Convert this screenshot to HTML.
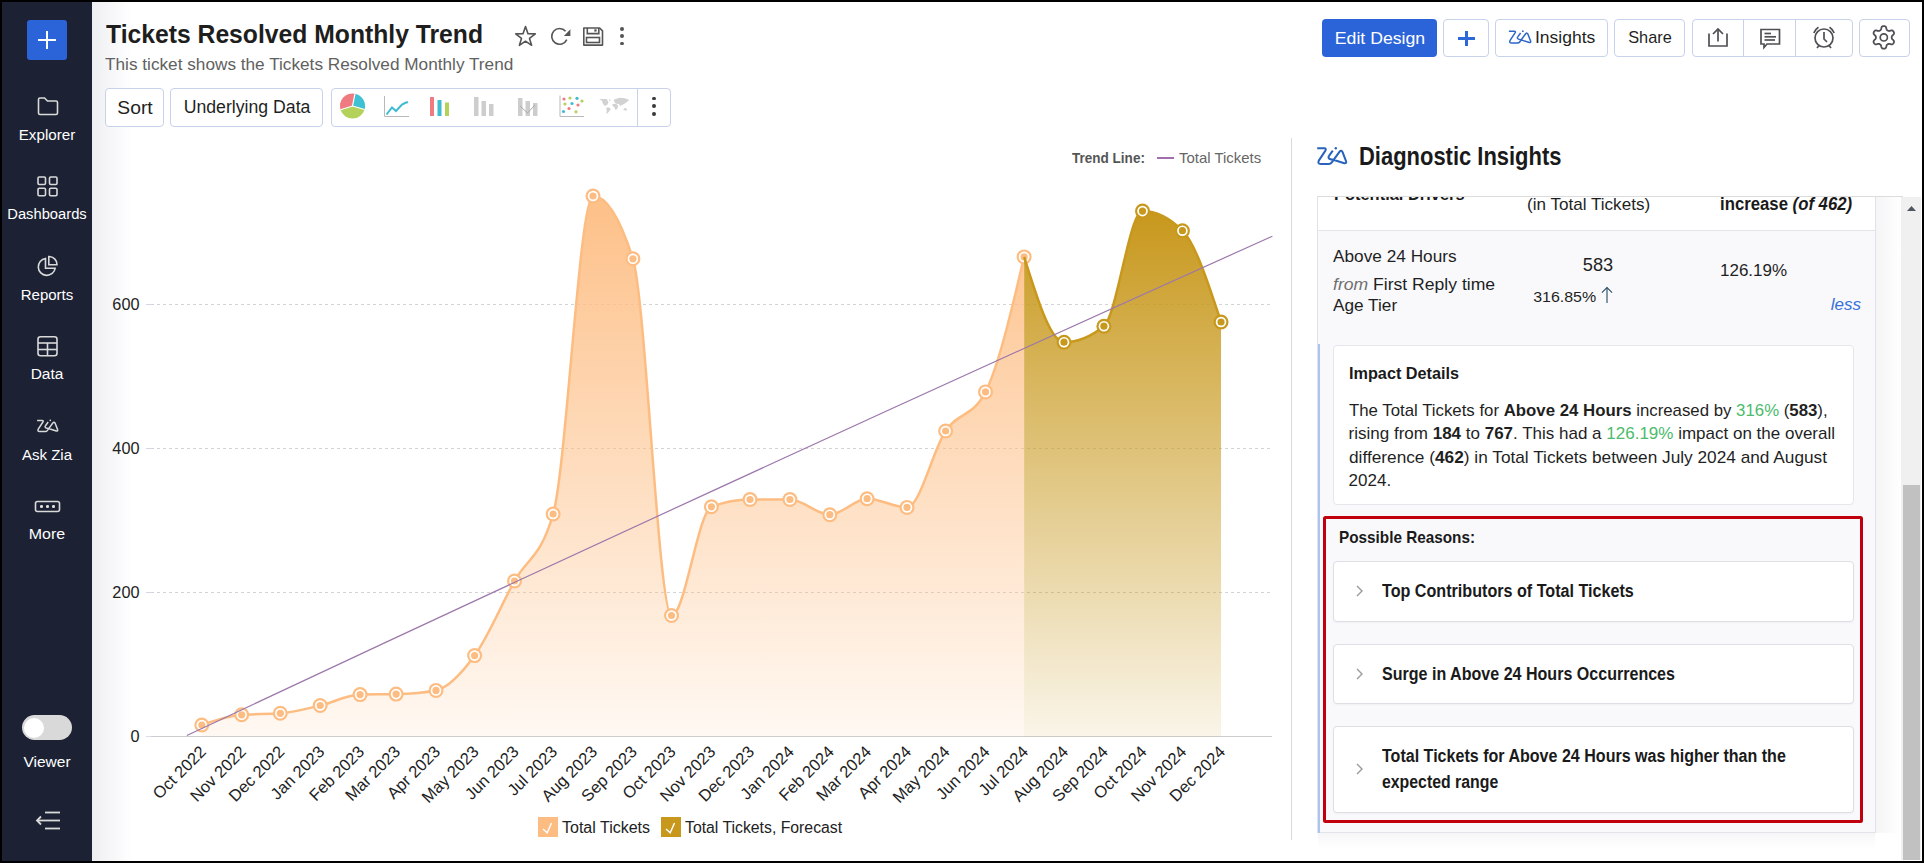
<!DOCTYPE html>
<html><head><meta charset="utf-8"><title>Tickets Resolved Monthly Trend</title>
<style>
html,body{margin:0;padding:0;}
body{width:1924px;height:863px;position:relative;overflow:hidden;background:#000;font-family:"Liberation Sans", sans-serif;}
#main{position:absolute;left:2px;top:2px;width:1920px;height:859px;background:#fff;}
</style></head><body>
<div id="main"></div>
<div style="position:absolute;left:2px;top:2px;width:90px;height:859px;background:#1c2233"></div>
<div style="position:absolute;left:27px;top:20px;width:40px;height:40px;background:#2b64d9;border-radius:3px"></div>
<div style="position:absolute;left:38px;top:39px;width:18px;height:2.4px;background:#fff"></div>
<div style="position:absolute;left:45.8px;top:31px;width:2.4px;height:18px;background:#fff"></div>
<svg width="94" height="863" style="position:absolute;left:0;top:0" fill="none" stroke="#d9d9d9" stroke-width="1.6">
<path d="M38.5,99 L38.5,113 Q38.5,114.5 40,114.5 L56,114.5 Q57.5,114.5 57.5,113 L57.5,102.5 Q57.5,101 56,101 L47.5,101 L44.5,98 L40,98 Q38.5,98 38.5,99.5 Z"/>
<rect x="38" y="177" width="7.5" height="7.5" rx="1.2"/><rect x="49.5" y="177" width="7.5" height="7.5" rx="1.2"/>
<rect x="38" y="188.2" width="7.5" height="7.5" rx="1.2"/><rect x="49.5" y="188.2" width="7.5" height="7.5" rx="1.2"/>
<path d="M45.5,258.5 A8.5,8.5 0 1 0 55.2,268.2 L45.5,268.2 Z"/>
<path d="M48.8,256.5 A8,8 0 0 1 57,264.7 L48.8,264.7 Z"/>
<rect x="38" y="336.8" width="19" height="19" rx="2.5"/><line x1="38" y1="343" x2="57" y2="343"/><line x1="38" y1="349.5" x2="57" y2="349.5"/><line x1="47.5" y1="343" x2="47.5" y2="356"/>
<g transform="translate(33.4,414.5) scale(0.71)"><path d="M5.2,8.3 L12.3,8.3 Q14.6,8.4 13.4,10.6 L6.8,20.6 Q5.3,23.9 8.8,24.1 L16.8,24.1 Q18.6,24 19.8,22.3 L27.6,11.6 Q29.3,9.8 30.6,12.2 L34.1,21.3 Q34.8,23.6 32.3,23.3 L21.3,19.8 Q17.2,19.4 16.6,17.8 Q16.2,16.8 17,15.8 L20.8,10.6" stroke-width="2.1" stroke-linejoin="round"/><circle cx="23.8" cy="8.2" r="1.2" fill="#d9d9d9" stroke="none"/></g>
<rect x="35.5" y="501.5" width="24" height="10" rx="2"/>
</svg>
<div style="position:absolute;left:40.1px;top:505.2px;width:2.6px;height:2.6px;border-radius:50%;background:#e0e0e0"></div>
<div style="position:absolute;left:46.1px;top:505.2px;width:2.6px;height:2.6px;border-radius:50%;background:#e0e0e0"></div>
<div style="position:absolute;left:52.1px;top:505.2px;width:2.6px;height:2.6px;border-radius:50%;background:#e0e0e0"></div>
<div style="position:absolute;left:47px;transform:translateX(-50%) scaleX(0.98);top:126.78px;font-size:15.5px;line-height:15.5px;font-weight:normal;font-style:normal;color:#ffffff;white-space:nowrap;">Explorer</div>
<div style="position:absolute;left:47px;transform:translateX(-50%) scaleX(0.95);top:206.28px;font-size:15.5px;line-height:15.5px;font-weight:normal;font-style:normal;color:#ffffff;white-space:nowrap;">Dashboards</div>
<div style="position:absolute;left:47px;transform:translateX(-50%) scaleX(0.97);top:286.78px;font-size:15.5px;line-height:15.5px;font-weight:normal;font-style:normal;color:#ffffff;white-space:nowrap;">Reports</div>
<div style="position:absolute;left:47px;transform:translateX(-50%) scaleX(1.0);top:366.28px;font-size:15.5px;line-height:15.5px;font-weight:normal;font-style:normal;color:#ffffff;white-space:nowrap;">Data</div>
<div style="position:absolute;left:47px;transform:translateX(-50%) scaleX(0.97);top:446.78px;font-size:15.5px;line-height:15.5px;font-weight:normal;font-style:normal;color:#ffffff;white-space:nowrap;">Ask Zia</div>
<div style="position:absolute;left:47px;transform:translateX(-50%) scaleX(1.03);top:526.28px;font-size:15.5px;line-height:15.5px;font-weight:normal;font-style:normal;color:#ffffff;white-space:nowrap;">More</div>
<div style="position:absolute;left:22.3px;top:715px;width:49.7px;height:25.2px;border-radius:12.6px;background:#d9d9d9"></div>
<div style="position:absolute;left:23.6px;top:717.6px;width:20.6px;height:20.6px;border-radius:50%;background:#fff"></div>
<div style="position:absolute;left:47px;transform:translateX(-50%) scaleX(1.035);top:754.30px;font-size:15px;line-height:15px;font-weight:normal;font-style:normal;color:#ffffff;white-space:nowrap;">Viewer</div>
<svg width="30" height="24" style="position:absolute;left:33px;top:809px" fill="none" stroke="#d9d9d9" stroke-width="1.8">
<line x1="12" y1="3.5" x2="27" y2="3.5"/><line x1="4" y1="11.5" x2="27" y2="11.5"/><line x1="12" y1="19.5" x2="27" y2="19.5"/><path d="M8,7.5 L4,11.5 L8,15.5"/></svg>
<div style="position:absolute;left:92px;top:2px;width:40px;height:859px;background:linear-gradient(to right,#eeeff2,rgba(255,255,255,0))"></div>
<div style="position:absolute;left:106px;top:20.69px;font-size:26px;line-height:26px;font-weight:bold;font-style:normal;color:#1e1e1e;white-space:nowrap;transform:scaleX(0.95);transform-origin:left center;">Tickets Resolved Monthly Trend</div>
<div style="position:absolute;left:104.5px;top:55.81px;font-size:17px;line-height:17px;font-weight:normal;font-style:normal;color:#616161;white-space:nowrap;transform:scaleX(1.012);transform-origin:left center;">This ticket shows the Tickets Resolved Monthly Trend</div>
<svg width="130" height="30" style="position:absolute;left:510px;top:21px" fill="none" stroke="#555" stroke-width="1.6">
<path d="M15.5,5.5 L18,12.7 L25.3,12.9 L19.5,17.4 L21.6,24.3 L15.5,20.2 L9.4,24.3 L11.5,17.4 L5.7,12.9 L13,12.7 Z" stroke-linejoin="round"/>
<path d="M56.8,18.6 A7.9,7.9 0 1 1 55.6,10.2" />
<path d="M60.4,8.2 L60.4,14.9 L53.9,14.9 Z" fill="#555" stroke="none"/>
<path d="M73.8,7 L89.6,7 L92.5,9.9 L92.5,24.1 L73.8,24.1 Z" stroke-linejoin="round"/>
<path d="M77.3,7 L77.3,12.6 L88.8,12.6 L88.8,7"/>
<rect x="84.3" y="8.3" width="2.3" height="2.3" fill="#555" stroke="none"/>
<rect x="76.5" y="16.5" width="13" height="5"/>
</svg>
<div style="position:absolute;left:620.1px;top:26.900000000000002px;width:3.8px;height:3.8px;border-radius:50%;background:#555"></div>
<div style="position:absolute;left:620.1px;top:34.4px;width:3.8px;height:3.8px;border-radius:50%;background:#555"></div>
<div style="position:absolute;left:620.1px;top:41.7px;width:3.8px;height:3.8px;border-radius:50%;background:#555"></div>
<div style="position:absolute;left:105px;top:88px;width:59px;height:38.5px;box-sizing:border-box;border:1px solid #c8d2ea;border-radius:4px;background:#fff;"></div>
<div style="position:absolute;left:134.5px;transform:translateX(-50%) scaleX(1.07);top:98.96px;font-size:18px;line-height:18px;font-weight:normal;font-style:normal;color:#1f1f1f;white-space:nowrap;">Sort</div>
<div style="position:absolute;left:170px;top:88px;width:153px;height:38.5px;box-sizing:border-box;border:1px solid #c8d2ea;border-radius:4px;background:#fff;"></div>
<div style="position:absolute;left:246.8px;transform:translateX(-50%) scaleX(1.01);top:99.39px;font-size:17.5px;line-height:17.5px;font-weight:normal;font-style:normal;color:#1f1f1f;white-space:nowrap;">Underlying Data</div>
<div style="position:absolute;left:330.5px;top:88px;width:340px;height:38.5px;box-sizing:border-box;border:1px solid #c8d2ea;border-radius:4px;background:#fff;"></div>
<div style="position:absolute;left:637px;top:89px;width:1px;height:36.5px;background:#c8d2ea"></div>
<svg width="340" height="40" style="position:absolute;left:330px;top:87px">
<g transform="translate(22.5,19)">
<path d="M0,0 L2.5,-12.3 A12.6,12.6 0 0 1 12.1,3.5 Z" fill="#3fc1d4"/>
<path d="M0,0 L12.1,3.5 A12.6,12.6 0 0 1 -12,3.8 Z" fill="#b4d15a"/>
<path d="M0,0 L-12,3.8 A12.6,12.6 0 0 1 2.5,-12.3 Z" fill="#ef7a7f"/>
<path d="M0,0 L2.5,-12.3 M0,0 L12.1,3.5 M0,0 L-12,3.8" stroke="#fff" stroke-width="1.2"/>
</g>
<path d="M54.5,9 L54.5,29.5 L79,29.5" fill="none" stroke="#b9b9b9" stroke-width="1"/>
<path d="M56.5,27.5 L62,20.5 L66,24 L72,17.5 L75,16 L78,15" fill="none" stroke="#3fbcd2" stroke-width="2"/>
<rect x="100" y="10" width="4" height="19" fill="#ef7a7f"/>
<rect x="107.5" y="13" width="4" height="16" fill="#3fbcd2"/>
<rect x="115" y="15.5" width="4" height="13.5" fill="#b4d15a"/>
<g fill="#cdcdcd">
<rect x="144" y="10" width="4.5" height="19"/><rect x="151.5" y="14" width="4.5" height="15"/><rect x="159" y="17" width="4.5" height="12"/>
<rect x="188" y="11" width="4.5" height="18"/><rect x="195.5" y="14" width="4.5" height="15"/><rect x="203" y="16" width="4.5" height="13"/>
</g>
<path d="M190,19 L197.5,26 L205,18" fill="none" stroke="#a8a8a8" stroke-width="1"/>
<path d="M230,8.5 L230,29.5 L254,29.5" fill="none" stroke="#b9b9b9" stroke-width="1"/>
<circle cx="234" cy="12" r="1.6" fill="#ef7a7f"/><circle cx="240" cy="11" r="1.6" fill="#b4d15a"/><circle cx="247" cy="11.3" r="1.6" fill="#3fbcd2"/><circle cx="252" cy="14" r="1.6" fill="#b4d15a"/>
<circle cx="235" cy="17" r="1.6" fill="#b4d15a"/><circle cx="242" cy="16.5" r="1.6" fill="#3fbcd2"/><circle cx="248" cy="18" r="1.6" fill="#ef7a7f"/>
<circle cx="239" cy="21.5" r="1.6" fill="#ef7a7f"/><circle cx="233.5" cy="24.5" r="1.6" fill="#3fbcd2"/><circle cx="246" cy="24.8" r="1.6" fill="#b4d15a"/>
<g fill="#d2d2d2">
<path d="M269.1,11.9 L276.7,11.9 L278.5,15.2 L277.4,17.8 L274.8,19 L273,16.7 L271.9,13.8 Z"/>
<path d="M278.9,12.3 L280.4,12.8 L280.2,14.1 L279.2,13.8 Z"/>
<path d="M276.3,20.4 L279.3,20.4 L280.8,22.3 L277.8,26 L276.3,26.7 L276.7,23.4 Z"/>
<path d="M284.1,12.6 L289.7,10.8 L294.9,11.2 L299.3,13 L295.6,16 L292.6,17.8 L290.4,19 L288.9,17.1 L286,16.7 L283.7,14.1 Z"/>
<path d="M282.6,17.1 L286,16.7 L288.2,18.6 L287.4,21.5 L285.6,23.2 L284.5,20.4 L282.3,18.6 Z"/>
<path d="M293.4,21.9 L295.6,20.8 L297.1,22.7 L296.3,23.8 L293.8,23 Z"/>
</g>
</svg>
<div style="position:absolute;left:651.9px;top:96.69999999999999px;width:3.8px;height:3.8px;border-radius:50%;background:#3a3a3a"></div>
<div style="position:absolute;left:651.9px;top:104.39999999999999px;width:3.8px;height:3.8px;border-radius:50%;background:#3a3a3a"></div>
<div style="position:absolute;left:651.9px;top:111.8px;width:3.8px;height:3.8px;border-radius:50%;background:#3a3a3a"></div>
<div style="position:absolute;left:1322px;top:19px;width:115px;height:38px;background:#2b64d9;border-radius:4px"></div>
<div style="position:absolute;left:1379.8px;transform:translateX(-50%) scaleX(1.04);top:29.61px;font-size:17px;line-height:17px;font-weight:normal;font-style:normal;color:#fff;white-space:nowrap;">Edit Design</div>
<div style="position:absolute;left:1443px;top:19px;width:45.5px;height:37.5px;box-sizing:border-box;border:1px solid #c8d2ea;border-radius:4px;background:#fff;"></div>
<div style="position:absolute;left:1458px;top:37px;width:17px;height:2.6px;background:#2d68d8"></div>
<div style="position:absolute;left:1465.2px;top:30.8px;width:2.6px;height:15.4px;background:#2d68d8"></div>
<div style="position:absolute;left:1495px;top:19px;width:112.5px;height:37.5px;box-sizing:border-box;border:1px solid #c8d2ea;border-radius:4px;background:#fff;"></div>
<svg width="40" height="30" style="position:absolute;left:1505px;top:24.5px" fill="none" stroke="#2d66c8" stroke-width="2"><g transform="translate(0,0) scale(0.75)">
<path d="M5.2,8.3 L12.3,8.3 Q14.6,8.4 13.4,10.6 L6.8,20.6 Q5.3,23.9 8.8,24.1 L16.8,24.1 Q18.6,24 19.8,22.3 L27.6,11.6 Q29.3,9.8 30.6,12.2 L34.1,21.3 Q34.8,23.6 32.3,23.3 L21.3,19.8 Q17.2,19.4 16.6,17.8 Q16.2,16.8 17,15.8 L20.8,10.6" stroke-linejoin="round"/><circle cx="23.8" cy="8.2" r="1.2" fill="#2d66c8" stroke="none"/></g></svg>
<div style="position:absolute;left:1535px;top:29.21px;font-size:17px;line-height:17px;font-weight:normal;font-style:normal;color:#1f1f1f;white-space:nowrap;transform:scaleX(1.03);transform-origin:left center;">Insights</div>
<div style="position:absolute;left:1614px;top:19px;width:71px;height:37.5px;box-sizing:border-box;border:1px solid #c8d2ea;border-radius:4px;background:#fff;"></div>
<div style="position:absolute;left:1649.5px;transform:translateX(-50%) scaleX(0.96);top:29.21px;font-size:17px;line-height:17px;font-weight:normal;font-style:normal;color:#1f1f1f;white-space:nowrap;">Share</div>
<div style="position:absolute;left:1692px;top:19px;width:161px;height:37.5px;box-sizing:border-box;border:1px solid #c8d2ea;border-radius:4px;background:#fff;"></div>
<div style="position:absolute;left:1743px;top:19px;width:1px;height:37.5px;background:#c8d2ea"></div>
<div style="position:absolute;left:1795px;top:19px;width:1px;height:37.5px;background:#c8d2ea"></div>
<div style="position:absolute;left:1859px;top:19px;width:51px;height:37.5px;box-sizing:border-box;border:1px solid #c8d2ea;border-radius:4px;background:#fff;"></div>
<svg width="240" height="40" style="position:absolute;left:1690px;top:15px" fill="none" stroke="#4f4f55" stroke-width="1.7">
<path d="M19,18.5 L19,31 L37,31 L37,18.5"/><line x1="28" y1="14.5" x2="28" y2="26.5"/><path d="M23,19 L28,14 L33,19"/>
<path d="M71,14.5 L89.5,14.5 L89.5,29 L77,29 L74,32.5 L74,29 L71,29 Z"/>
<line x1="74.5" y1="18.5" x2="81" y2="18.5"/><line x1="74.5" y1="21.8" x2="86" y2="21.8"/><line x1="74.5" y1="25" x2="85" y2="25"/>
<circle cx="134" cy="23" r="9"/><path d="M134,17 L134,24 L137,27"/><path d="M123.8,18 A11.5,11.5 0 0 1 128.5,12.2"/><path d="M139.5,12.2 A11.5,11.5 0 0 1 144.2,18"/><line x1="129" y1="30.5" x2="127" y2="33"/><line x1="139" y1="30.5" x2="141" y2="33"/>
<g transform="translate(193.8,22.4)"><path d="M0.00,-11.30 L0.49,-11.27 L0.98,-11.18 L1.45,-11.00 L1.88,-10.66 L2.23,-10.08 L2.48,-9.27 L2.67,-8.47 L2.86,-7.87 L3.10,-7.49 L3.37,-7.23 L3.66,-7.02 L3.95,-6.84 L4.25,-6.68 L4.57,-6.53 L4.93,-6.43 L5.38,-6.42 L6.00,-6.54 L6.79,-6.79 L7.61,-6.97 L8.29,-6.96 L8.80,-6.76 L9.20,-6.44 L9.52,-6.06 L9.79,-5.65 L10.01,-5.21 L10.18,-4.74 L10.25,-4.25 L10.17,-3.70 L9.85,-3.10 L9.27,-2.48 L8.67,-1.92 L8.25,-1.45 L8.03,-1.06 L7.94,-0.69 L7.91,-0.35 L7.90,0.00 L7.91,0.35 L7.94,0.69 L8.03,1.06 L8.25,1.45 L8.67,1.92 L9.27,2.48 L9.85,3.10 L10.17,3.70 L10.25,4.25 L10.18,4.74 L10.01,5.21 L9.79,5.65 L9.52,6.06 L9.20,6.44 L8.80,6.76 L8.29,6.96 L7.61,6.97 L6.79,6.79 L6.00,6.54 L5.38,6.42 L4.93,6.43 L4.57,6.53 L4.25,6.68 L3.95,6.84 L3.66,7.02 L3.37,7.23 L3.10,7.49 L2.86,7.87 L2.67,8.47 L2.48,9.27 L2.23,10.08 L1.88,10.66 L1.45,11.00 L0.98,11.18 L0.49,11.27 L0.00,11.30 L-0.49,11.27 L-0.98,11.18 L-1.45,11.00 L-1.88,10.66 L-2.23,10.08 L-2.48,9.27 L-2.67,8.47 L-2.86,7.87 L-3.10,7.49 L-3.37,7.23 L-3.66,7.02 L-3.95,6.84 L-4.25,6.68 L-4.57,6.53 L-4.93,6.43 L-5.38,6.42 L-6.00,6.54 L-6.79,6.79 L-7.61,6.97 L-8.29,6.96 L-8.80,6.76 L-9.20,6.44 L-9.52,6.06 L-9.79,5.65 L-10.01,5.21 L-10.18,4.74 L-10.25,4.25 L-10.17,3.70 L-9.85,3.10 L-9.27,2.48 L-8.67,1.92 L-8.25,1.45 L-8.03,1.06 L-7.94,0.69 L-7.91,0.35 L-7.90,0.00 L-7.91,-0.35 L-7.94,-0.69 L-8.03,-1.06 L-8.25,-1.45 L-8.67,-1.92 L-9.27,-2.48 L-9.85,-3.10 L-10.17,-3.70 L-10.25,-4.25 L-10.18,-4.74 L-10.01,-5.21 L-9.79,-5.65 L-9.52,-6.06 L-9.20,-6.44 L-8.80,-6.76 L-8.29,-6.96 L-7.61,-6.97 L-6.79,-6.79 L-6.00,-6.54 L-5.38,-6.42 L-4.93,-6.43 L-4.57,-6.53 L-4.25,-6.68 L-3.95,-6.84 L-3.66,-7.02 L-3.37,-7.23 L-3.10,-7.49 L-2.86,-7.87 L-2.67,-8.47 L-2.48,-9.27 L-2.23,-10.08 L-1.88,-10.66 L-1.45,-11.00 L-0.98,-11.18 L-0.49,-11.27 Z" stroke-linejoin="round" stroke-width="1.8"/><circle cx="0" cy="0" r="3.6"/></g>
</svg>
<svg width="1924" height="863" style="position:absolute;left:0;top:0">
<defs><linearGradient id="ga" x1="0" y1="196" x2="0" y2="736" gradientUnits="userSpaceOnUse"><stop offset="0" stop-color="#fdbd82" stop-opacity="0.95"/><stop offset="1" stop-color="#fdbd82" stop-opacity="0.10"/></linearGradient><linearGradient id="gf" x1="0" y1="211" x2="0" y2="736" gradientUnits="userSpaceOnUse"><stop offset="0" stop-color="#c8981c" stop-opacity="1"/><stop offset="1" stop-color="#c8981c" stop-opacity="0.10"/></linearGradient></defs>
<line x1="146" y1="304.5" x2="151" y2="304.5" stroke="#d6d6e6" stroke-width="1"/>
<line x1="151" y1="304.5" x2="1272" y2="304.5" stroke="#c8c8c8" stroke-opacity="0.8" stroke-width="1" stroke-dasharray="3,3"/>
<line x1="146" y1="448.5" x2="151" y2="448.5" stroke="#d6d6e6" stroke-width="1"/>
<line x1="151" y1="448.5" x2="1272" y2="448.5" stroke="#c8c8c8" stroke-opacity="0.8" stroke-width="1" stroke-dasharray="3,3"/>
<line x1="146" y1="592.5" x2="151" y2="592.5" stroke="#d6d6e6" stroke-width="1"/>
<line x1="151" y1="592.5" x2="1272" y2="592.5" stroke="#c8c8c8" stroke-opacity="0.8" stroke-width="1" stroke-dasharray="3,3"/>
<line x1="146" y1="736.5" x2="151" y2="736.5" stroke="#dcdcec" stroke-width="1"/><line x1="151" y1="736.5" x2="1272" y2="736.5" stroke="#cdcdcd" stroke-width="1"/>
<path d="M201.80,725.00 C215.10,720.42 228.40,715.83 241.69,714.80 C254.56,713.80 267.43,714.30 280.30,713.30 C293.60,712.27 306.90,708.62 320.19,705.50 C333.49,702.38 346.79,694.97 360.09,694.60 C372.10,694.27 384.11,694.43 396.12,694.10 C409.42,693.73 422.72,692.87 436.02,690.40 C448.88,688.01 461.75,673.33 474.62,655.60 C487.92,637.28 501.22,604.96 514.52,581.00 C527.39,557.82 540.25,558.67 553.12,514.00 C566.42,467.84 579.72,196.00 593.02,196.00 C606.32,196.00 619.61,216.93 632.91,258.80 C645.78,299.32 658.65,615.50 671.52,615.50 C684.82,615.50 698.11,511.83 711.41,506.80 C724.28,501.93 737.15,499.50 750.02,499.50 C763.32,499.50 776.62,499.50 789.91,499.50 C803.21,499.50 816.51,514.70 829.81,514.70 C842.25,514.70 854.69,498.70 867.13,498.70 C880.43,498.70 893.72,507.40 907.02,507.40 C919.89,507.40 932.76,450.15 945.63,431.00 C958.93,411.22 972.22,417.97 985.52,391.90 C998.39,366.67 1011.26,311.79 1024.13,256.90 L1024.13,736.4 L201.80,736.4 Z" fill="url(#ga)"/>
<path d="M201.80,725.00 C215.10,720.42 228.40,715.83 241.69,714.80 C254.56,713.80 267.43,714.30 280.30,713.30 C293.60,712.27 306.90,708.62 320.19,705.50 C333.49,702.38 346.79,694.97 360.09,694.60 C372.10,694.27 384.11,694.43 396.12,694.10 C409.42,693.73 422.72,692.87 436.02,690.40 C448.88,688.01 461.75,673.33 474.62,655.60 C487.92,637.28 501.22,604.96 514.52,581.00 C527.39,557.82 540.25,558.67 553.12,514.00 C566.42,467.84 579.72,196.00 593.02,196.00 C606.32,196.00 619.61,216.93 632.91,258.80 C645.78,299.32 658.65,615.50 671.52,615.50 C684.82,615.50 698.11,511.83 711.41,506.80 C724.28,501.93 737.15,499.50 750.02,499.50 C763.32,499.50 776.62,499.50 789.91,499.50 C803.21,499.50 816.51,514.70 829.81,514.70 C842.25,514.70 854.69,498.70 867.13,498.70 C880.43,498.70 893.72,507.40 907.02,507.40 C919.89,507.40 932.76,450.15 945.63,431.00 C958.93,411.22 972.22,417.97 985.52,391.90 C998.39,366.67 1011.26,311.79 1024.13,256.90" fill="none" stroke="#fdbd82" stroke-width="2.5"/>
<circle cx="201.80" cy="725.00" r="7.5" fill="#fdbd82"/><circle cx="201.80" cy="725.00" r="5.3" fill="#fff"/><circle cx="201.80" cy="725.00" r="3.6" fill="#fdbd82"/>
<circle cx="241.69" cy="714.80" r="7.5" fill="#fdbd82"/><circle cx="241.69" cy="714.80" r="5.3" fill="#fff"/><circle cx="241.69" cy="714.80" r="3.6" fill="#fdbd82"/>
<circle cx="280.30" cy="713.30" r="7.5" fill="#fdbd82"/><circle cx="280.30" cy="713.30" r="5.3" fill="#fff"/><circle cx="280.30" cy="713.30" r="3.6" fill="#fdbd82"/>
<circle cx="320.19" cy="705.50" r="7.5" fill="#fdbd82"/><circle cx="320.19" cy="705.50" r="5.3" fill="#fff"/><circle cx="320.19" cy="705.50" r="3.6" fill="#fdbd82"/>
<circle cx="360.09" cy="694.60" r="7.5" fill="#fdbd82"/><circle cx="360.09" cy="694.60" r="5.3" fill="#fff"/><circle cx="360.09" cy="694.60" r="3.6" fill="#fdbd82"/>
<circle cx="396.12" cy="694.10" r="7.5" fill="#fdbd82"/><circle cx="396.12" cy="694.10" r="5.3" fill="#fff"/><circle cx="396.12" cy="694.10" r="3.6" fill="#fdbd82"/>
<circle cx="436.02" cy="690.40" r="7.5" fill="#fdbd82"/><circle cx="436.02" cy="690.40" r="5.3" fill="#fff"/><circle cx="436.02" cy="690.40" r="3.6" fill="#fdbd82"/>
<circle cx="474.62" cy="655.60" r="7.5" fill="#fdbd82"/><circle cx="474.62" cy="655.60" r="5.3" fill="#fff"/><circle cx="474.62" cy="655.60" r="3.6" fill="#fdbd82"/>
<circle cx="514.52" cy="581.00" r="7.5" fill="#fdbd82"/><circle cx="514.52" cy="581.00" r="5.3" fill="#fff"/><circle cx="514.52" cy="581.00" r="3.6" fill="#fdbd82"/>
<circle cx="553.12" cy="514.00" r="7.5" fill="#fdbd82"/><circle cx="553.12" cy="514.00" r="5.3" fill="#fff"/><circle cx="553.12" cy="514.00" r="3.6" fill="#fdbd82"/>
<circle cx="593.02" cy="196.00" r="7.5" fill="#fdbd82"/><circle cx="593.02" cy="196.00" r="5.3" fill="#fff"/><circle cx="593.02" cy="196.00" r="3.6" fill="#fdbd82"/>
<circle cx="632.91" cy="258.80" r="7.5" fill="#fdbd82"/><circle cx="632.91" cy="258.80" r="5.3" fill="#fff"/><circle cx="632.91" cy="258.80" r="3.6" fill="#fdbd82"/>
<circle cx="671.52" cy="615.50" r="7.5" fill="#fdbd82"/><circle cx="671.52" cy="615.50" r="5.3" fill="#fff"/><circle cx="671.52" cy="615.50" r="3.6" fill="#fdbd82"/>
<circle cx="711.41" cy="506.80" r="7.5" fill="#fdbd82"/><circle cx="711.41" cy="506.80" r="5.3" fill="#fff"/><circle cx="711.41" cy="506.80" r="3.6" fill="#fdbd82"/>
<circle cx="750.02" cy="499.50" r="7.5" fill="#fdbd82"/><circle cx="750.02" cy="499.50" r="5.3" fill="#fff"/><circle cx="750.02" cy="499.50" r="3.6" fill="#fdbd82"/>
<circle cx="789.91" cy="499.50" r="7.5" fill="#fdbd82"/><circle cx="789.91" cy="499.50" r="5.3" fill="#fff"/><circle cx="789.91" cy="499.50" r="3.6" fill="#fdbd82"/>
<circle cx="829.81" cy="514.70" r="7.5" fill="#fdbd82"/><circle cx="829.81" cy="514.70" r="5.3" fill="#fff"/><circle cx="829.81" cy="514.70" r="3.6" fill="#fdbd82"/>
<circle cx="867.13" cy="498.70" r="7.5" fill="#fdbd82"/><circle cx="867.13" cy="498.70" r="5.3" fill="#fff"/><circle cx="867.13" cy="498.70" r="3.6" fill="#fdbd82"/>
<circle cx="907.02" cy="507.40" r="7.5" fill="#fdbd82"/><circle cx="907.02" cy="507.40" r="5.3" fill="#fff"/><circle cx="907.02" cy="507.40" r="3.6" fill="#fdbd82"/>
<circle cx="945.63" cy="431.00" r="7.5" fill="#fdbd82"/><circle cx="945.63" cy="431.00" r="5.3" fill="#fff"/><circle cx="945.63" cy="431.00" r="3.6" fill="#fdbd82"/>
<circle cx="985.52" cy="391.90" r="7.5" fill="#fdbd82"/><circle cx="985.52" cy="391.90" r="5.3" fill="#fff"/><circle cx="985.52" cy="391.90" r="3.6" fill="#fdbd82"/>
<circle cx="1024.13" cy="256.90" r="7.5" fill="#fdbd82"/><circle cx="1024.13" cy="256.90" r="5.3" fill="#fff"/><circle cx="1024.13" cy="256.90" r="3.6" fill="#fdbd82"/>
<path d="M1024.13,256.90 C1037.43,299.55 1050.73,342.20 1064.02,342.20 C1077.32,342.20 1090.62,336.87 1103.92,326.20 C1116.79,315.88 1129.65,211.10 1142.52,211.10 C1155.82,211.10 1169.12,217.63 1182.42,230.70 C1195.29,243.35 1208.16,282.67 1221.02,322.00 L1221.02,736.4 L1024.13,736.4 Z" fill="url(#gf)"/>
<path d="M1024.13,256.90 C1037.43,299.55 1050.73,342.20 1064.02,342.20 C1077.32,342.20 1090.62,336.87 1103.92,326.20 C1116.79,315.88 1129.65,211.10 1142.52,211.10 C1155.82,211.10 1169.12,217.63 1182.42,230.70 C1195.29,243.35 1208.16,282.67 1221.02,322.00" fill="none" stroke="#c8981c" stroke-width="2.5"/>
<circle cx="1064.02" cy="342.20" r="7.5" fill="#c8981c"/><circle cx="1064.02" cy="342.20" r="5.3" fill="#fff"/><circle cx="1064.02" cy="342.20" r="3.6" fill="#c8981c"/>
<circle cx="1103.92" cy="326.20" r="7.5" fill="#c8981c"/><circle cx="1103.92" cy="326.20" r="5.3" fill="#fff"/><circle cx="1103.92" cy="326.20" r="3.6" fill="#c8981c"/>
<circle cx="1142.52" cy="211.10" r="7.5" fill="#c8981c"/><circle cx="1142.52" cy="211.10" r="5.3" fill="#fff"/><circle cx="1142.52" cy="211.10" r="3.6" fill="#c8981c"/>
<circle cx="1182.42" cy="230.70" r="7.5" fill="#c8981c"/><circle cx="1182.42" cy="230.70" r="5.3" fill="#fff"/><circle cx="1182.42" cy="230.70" r="3.6" fill="#c8981c"/>
<circle cx="1221.02" cy="322.00" r="7.5" fill="#c8981c"/><circle cx="1221.02" cy="322.00" r="5.3" fill="#fff"/><circle cx="1221.02" cy="322.00" r="3.6" fill="#c8981c"/>
<path d="M186.8,735.57 Q729.60,480.21 1272.4,236.22" fill="none" stroke="#9c78aa" stroke-width="1.2"/>
<text x="139.5" y="742.1" text-anchor="end" font-family="Liberation Sans" font-size="16.3" fill="#222">0</text>
<text x="139.5" y="598.2" text-anchor="end" font-family="Liberation Sans" font-size="16.3" fill="#222">200</text>
<text x="139.5" y="454.2" text-anchor="end" font-family="Liberation Sans" font-size="16.3" fill="#222">400</text>
<text x="139.5" y="310.2" text-anchor="end" font-family="Liberation Sans" font-size="16.3" fill="#222">600</text>
<text transform="translate(198.8,744.5) rotate(-45)" text-anchor="end" font-family="Liberation Sans" font-size="16.5" fill="#222" dy="0.7em">Oct 2022</text>
<text transform="translate(238.7,744.5) rotate(-45)" text-anchor="end" font-family="Liberation Sans" font-size="16.5" fill="#222" dy="0.7em">Nov 2022</text>
<text transform="translate(277.3,744.5) rotate(-45)" text-anchor="end" font-family="Liberation Sans" font-size="16.5" fill="#222" dy="0.7em">Dec 2022</text>
<text transform="translate(317.2,744.5) rotate(-45)" text-anchor="end" font-family="Liberation Sans" font-size="16.5" fill="#222" dy="0.7em">Jan 2023</text>
<text transform="translate(357.1,744.5) rotate(-45)" text-anchor="end" font-family="Liberation Sans" font-size="16.5" fill="#222" dy="0.7em">Feb 2023</text>
<text transform="translate(393.1,744.5) rotate(-45)" text-anchor="end" font-family="Liberation Sans" font-size="16.5" fill="#222" dy="0.7em">Mar 2023</text>
<text transform="translate(433.0,744.5) rotate(-45)" text-anchor="end" font-family="Liberation Sans" font-size="16.5" fill="#222" dy="0.7em">Apr 2023</text>
<text transform="translate(471.6,744.5) rotate(-45)" text-anchor="end" font-family="Liberation Sans" font-size="16.5" fill="#222" dy="0.7em">May 2023</text>
<text transform="translate(511.5,744.5) rotate(-45)" text-anchor="end" font-family="Liberation Sans" font-size="16.5" fill="#222" dy="0.7em">Jun 2023</text>
<text transform="translate(550.1,744.5) rotate(-45)" text-anchor="end" font-family="Liberation Sans" font-size="16.5" fill="#222" dy="0.7em">Jul 2023</text>
<text transform="translate(590.0,744.5) rotate(-45)" text-anchor="end" font-family="Liberation Sans" font-size="16.5" fill="#222" dy="0.7em">Aug 2023</text>
<text transform="translate(629.9,744.5) rotate(-45)" text-anchor="end" font-family="Liberation Sans" font-size="16.5" fill="#222" dy="0.7em">Sep 2023</text>
<text transform="translate(668.5,744.5) rotate(-45)" text-anchor="end" font-family="Liberation Sans" font-size="16.5" fill="#222" dy="0.7em">Oct 2023</text>
<text transform="translate(708.4,744.5) rotate(-45)" text-anchor="end" font-family="Liberation Sans" font-size="16.5" fill="#222" dy="0.7em">Nov 2023</text>
<text transform="translate(747.0,744.5) rotate(-45)" text-anchor="end" font-family="Liberation Sans" font-size="16.5" fill="#222" dy="0.7em">Dec 2023</text>
<text transform="translate(786.9,744.5) rotate(-45)" text-anchor="end" font-family="Liberation Sans" font-size="16.5" fill="#222" dy="0.7em">Jan 2024</text>
<text transform="translate(826.8,744.5) rotate(-45)" text-anchor="end" font-family="Liberation Sans" font-size="16.5" fill="#222" dy="0.7em">Feb 2024</text>
<text transform="translate(864.1,744.5) rotate(-45)" text-anchor="end" font-family="Liberation Sans" font-size="16.5" fill="#222" dy="0.7em">Mar 2024</text>
<text transform="translate(904.0,744.5) rotate(-45)" text-anchor="end" font-family="Liberation Sans" font-size="16.5" fill="#222" dy="0.7em">Apr 2024</text>
<text transform="translate(942.6,744.5) rotate(-45)" text-anchor="end" font-family="Liberation Sans" font-size="16.5" fill="#222" dy="0.7em">May 2024</text>
<text transform="translate(982.5,744.5) rotate(-45)" text-anchor="end" font-family="Liberation Sans" font-size="16.5" fill="#222" dy="0.7em">Jun 2024</text>
<text transform="translate(1021.1,744.5) rotate(-45)" text-anchor="end" font-family="Liberation Sans" font-size="16.5" fill="#222" dy="0.7em">Jul 2024</text>
<text transform="translate(1061.0,744.5) rotate(-45)" text-anchor="end" font-family="Liberation Sans" font-size="16.5" fill="#222" dy="0.7em">Aug 2024</text>
<text transform="translate(1100.9,744.5) rotate(-45)" text-anchor="end" font-family="Liberation Sans" font-size="16.5" fill="#222" dy="0.7em">Sep 2024</text>
<text transform="translate(1139.5,744.5) rotate(-45)" text-anchor="end" font-family="Liberation Sans" font-size="16.5" fill="#222" dy="0.7em">Oct 2024</text>
<text transform="translate(1179.4,744.5) rotate(-45)" text-anchor="end" font-family="Liberation Sans" font-size="16.5" fill="#222" dy="0.7em">Nov 2024</text>
<text transform="translate(1218.0,744.5) rotate(-45)" text-anchor="end" font-family="Liberation Sans" font-size="16.5" fill="#222" dy="0.7em">Dec 2024</text>
</svg>
<div style="position:absolute;left:1072px;top:150.93px;font-size:14.5px;line-height:14.5px;font-weight:bold;font-style:normal;color:#555;white-space:nowrap;transform:scaleX(0.933);transform-origin:left center;">Trend Line:</div>
<div style="position:absolute;left:1157px;top:156.8px;width:17px;height:2px;background:#a06fae"></div>
<div style="position:absolute;left:1179px;top:150.93px;font-size:14.5px;line-height:14.5px;font-weight:normal;font-style:normal;color:#666;white-space:nowrap;transform:scaleX(1.03);transform-origin:left center;">Total Tickets</div>
<div style="position:absolute;left:538px;top:817px;width:20px;height:20px;background:#fdbd82"></div>
<svg width="20" height="20" style="position:absolute;left:538px;top:817px"><path d="M5,12 L9.2,15.8 L13.5,6" fill="none" stroke="#fff" stroke-width="1.4"/></svg>
<div style="position:absolute;left:562px;top:819.76px;font-size:16px;line-height:16px;font-weight:normal;font-style:normal;color:#222;white-space:nowrap;">Total Tickets</div>
<div style="position:absolute;left:661px;top:817px;width:20px;height:20px;background:#c8981c"></div>
<svg width="20" height="20" style="position:absolute;left:661px;top:817px"><path d="M5,12 L9.2,15.8 L13.5,6" fill="none" stroke="#fff" stroke-width="1.4"/></svg>
<div style="position:absolute;left:685px;top:819.76px;font-size:16px;line-height:16px;font-weight:normal;font-style:normal;color:#222;white-space:nowrap;transform:scaleX(0.987);transform-origin:left center;">Total Tickets, Forecast</div>
<div style="position:absolute;left:1291px;top:138px;width:1px;height:702px;background:#d9d9d9"></div>
<svg width="40" height="30" style="position:absolute;left:1312px;top:140px" fill="none" stroke="#2862bc" stroke-width="2">
<path d="M5.2,8.3 L12.3,8.3 Q14.6,8.4 13.4,10.6 L6.8,20.6 Q5.3,23.9 8.8,24.1 L16.8,24.1 Q18.6,24 19.8,22.3 L27.6,11.6 Q29.3,9.8 30.6,12.2 L34.1,21.3 Q34.8,23.6 32.3,23.3 L21.3,19.8 Q17.2,19.4 16.6,17.8 Q16.2,16.8 17,15.8 L20.8,10.6" stroke-linejoin="round"/><circle cx="23.8" cy="8.2" r="1.2" fill="#2862bc" stroke="none"/></svg>
<div style="position:absolute;left:1359px;top:144.04px;font-size:25px;line-height:25px;font-weight:bold;font-style:normal;color:#1a1a1a;white-space:nowrap;transform:scaleX(0.878);transform-origin:left center;">Diagnostic Insights</div>
<div style="position:absolute;left:1317px;top:196px;width:586px;height:1px;background:#dcdcdc"></div>
<div style="position:absolute;left:1318px;top:197px;width:557px;height:33px;background:#fff;overflow:hidden"></div>
<div style="position:absolute;left:1318px;top:230px;width:557px;height:603px;background:#f9f9fc"></div>
<div style="position:absolute;left:1317px;top:197px;width:1px;height:636px;background:#e1e1ea"></div>
<div style="position:absolute;left:1875px;top:197px;width:1px;height:636px;background:#e1e1ea"></div>
<div style="position:absolute;left:1318px;top:230px;width:557px;height:1px;background:#e3e3ea"></div>
<div style="position:absolute;left:1318px;top:832px;width:557px;height:1px;background:#e3e3ea"></div>
<div style="position:absolute;left:1318px;top:833px;width:557px;height:16px;background:linear-gradient(#f6f6f8,rgba(255,255,255,0))"></div>
<div style="position:absolute;left:1876px;top:197px;width:25px;height:636px;background:linear-gradient(to right,#f5f5f5,#ffffff)"></div>
<div style="position:absolute;left:1318px;top:197px;width:557px;height:33px;overflow:hidden"><div style="position:absolute;left:15.5px;top:-11px;font-size:17px;line-height:17px;font-weight:bold;color:#1a1a1a;white-space:nowrap;transform:scaleX(0.967);transform-origin:left">Potential Drivers</div></div>
<div style="position:absolute;left:1526.6px;top:195.81px;font-size:17px;line-height:17px;font-weight:normal;font-style:normal;color:#1f1f1f;white-space:nowrap;transform:scaleX(1.005);transform-origin:left center;">(in Total Tickets)</div>
<div style="position:absolute;left:1720px;top:195.26px;font-size:18px;line-height:18px;font-weight:bold;font-style:normal;color:#1a1a1a;white-space:nowrap;transform:scaleX(0.93);transform-origin:left center;">increase <i>(of 462)</i></div>
<div style="position:absolute;left:1332.5px;top:248.21px;font-size:17px;line-height:17px;font-weight:normal;font-style:normal;color:#1f1f1f;white-space:nowrap;transform:scaleX(1.014);transform-origin:left center;">Above 24 Hours</div>
<div style="position:absolute;left:1332.5px;top:276.11px;font-size:17px;line-height:17px;font-weight:normal;font-style:normal;color:#1f1f1f;white-space:nowrap;transform:scaleX(1.034);transform-origin:left center;"><i style="color:#6f6f6f">from</i> First Reply time</div>
<div style="position:absolute;left:1332.5px;top:296.91px;font-size:17px;line-height:17px;font-weight:normal;font-style:normal;color:#1f1f1f;white-space:nowrap;transform:scaleX(1.013);transform-origin:left center;">Age Tier</div>
<div style="position:absolute;right:310.70000000000005px;top:256.69px;font-size:17.5px;line-height:17.5px;font-weight:normal;font-style:normal;color:#1f1f1f;white-space:nowrap;transform:scaleX(1.04);transform-origin:right center;">583</div>
<div style="position:absolute;right:327.5px;top:289.08px;font-size:15.5px;line-height:15.5px;font-weight:normal;font-style:normal;color:#1f1f1f;white-space:nowrap;transform:scaleX(1.03);transform-origin:right center;">316.85%</div>
<svg width="14" height="18" style="position:absolute;left:1600px;top:285px;overflow:visible" fill="none" stroke="#2f5068" stroke-width="1.15"><line x1="7" y1="2.5" x2="7" y2="18"/><path d="M1.9,7.6 L7,2.5 L12.1,7.6"/></svg>
<div style="position:absolute;left:1720px;top:262.11px;font-size:17px;line-height:17px;font-weight:normal;font-style:normal;color:#1f1f1f;white-space:nowrap;">126.19%</div>
<div style="position:absolute;right:63px;top:295.71px;font-size:17px;line-height:17px;font-weight:normal;font-style:italic;color:#3670d8;white-space:nowrap;">less</div>
<div style="position:absolute;left:1318px;top:344px;width:2px;height:489px;background:#adc3f0"></div>
<div style="position:absolute;left:1333px;top:345px;width:521px;height:160px;box-sizing:border-box;background:#fff;border:1px solid #e6e6ec;border-radius:4px"></div>
<div style="position:absolute;left:1348.6px;top:364.91px;font-size:17px;line-height:17px;font-weight:bold;font-style:normal;color:#1a1a1a;white-space:nowrap;transform:scaleX(0.955);transform-origin:left center;">Impact Details</div>
<div style="position:absolute;left:1348.6px;top:402.31px;font-size:17px;line-height:17px;font-weight:normal;font-style:normal;color:#1f1f1f;white-space:nowrap;transform:scaleX(0.988);transform-origin:left center;">The Total Tickets for <b>Above 24 Hours</b> increased by <span style="color:#4cbb6c">316%</span> (<b>583</b>),</div>
<div style="position:absolute;left:1348.6px;top:425.41px;font-size:17px;line-height:17px;font-weight:normal;font-style:normal;color:#1f1f1f;white-space:nowrap;">rising from <b>184</b> to <b>767</b>. This had a <span style="color:#4cbb6c">126.19%</span> impact on the overall</div>
<div style="position:absolute;left:1348.6px;top:448.51px;font-size:17px;line-height:17px;font-weight:normal;font-style:normal;color:#1f1f1f;white-space:nowrap;transform:scaleX(1.015);transform-origin:left center;">difference (<b>462</b>) in Total Tickets between July 2024 and August</div>
<div style="position:absolute;left:1348.6px;top:471.61px;font-size:17px;line-height:17px;font-weight:normal;font-style:normal;color:#1f1f1f;white-space:nowrap;">2024.</div>
<div style="position:absolute;left:1322.5px;top:516.4px;width:540.5px;height:307px;box-sizing:border-box;border:3px solid #c0000c;border-radius:2.5px"></div>
<div style="position:absolute;left:1339px;top:529.11px;font-size:17px;line-height:17px;font-weight:bold;font-style:normal;color:#1a1a1a;white-space:nowrap;transform:scaleX(0.9);transform-origin:left center;">Possible Reasons:</div>
<div style="position:absolute;left:1333px;top:561px;width:521px;height:60.5px;box-sizing:border-box;background:#fff;border:1px solid #dedee4;border-radius:4px;box-shadow:0 1px 2px rgba(0,0,0,0.04)"></div>
<svg width="10" height="16" style="position:absolute;left:1354px;top:582.5px" fill="none" stroke="#9a9a9a" stroke-width="1.4"><path d="M3,3 L8,8 L3,13"/></svg>
<div style="position:absolute;left:1382px;top:581.76px;font-size:18px;line-height:18px;font-weight:bold;font-style:normal;color:#1a1a1a;white-space:nowrap;transform:scaleX(0.896);transform-origin:left center;">Top Contributors of Total Tickets</div>
<div style="position:absolute;left:1333px;top:644px;width:521px;height:59.5px;box-sizing:border-box;background:#fff;border:1px solid #dedee4;border-radius:4px;box-shadow:0 1px 2px rgba(0,0,0,0.04)"></div>
<svg width="10" height="16" style="position:absolute;left:1354px;top:665.5px" fill="none" stroke="#9a9a9a" stroke-width="1.4"><path d="M3,3 L8,8 L3,13"/></svg>
<div style="position:absolute;left:1382px;top:664.76px;font-size:18px;line-height:18px;font-weight:bold;font-style:normal;color:#1a1a1a;white-space:nowrap;transform:scaleX(0.892);transform-origin:left center;">Surge in Above 24 Hours Occurrences</div>
<div style="position:absolute;left:1333px;top:726px;width:521px;height:86.5px;box-sizing:border-box;background:#fff;border:1px solid #dedee4;border-radius:4px;box-shadow:0 1px 2px rgba(0,0,0,0.04)"></div>
<svg width="10" height="16" style="position:absolute;left:1354px;top:761px" fill="none" stroke="#9a9a9a" stroke-width="1.4"><path d="M3,3 L8,8 L3,13"/></svg>
<div style="position:absolute;left:1382px;top:747.16px;font-size:18px;line-height:18px;font-weight:bold;font-style:normal;color:#1a1a1a;white-space:nowrap;transform:scaleX(0.892);transform-origin:left center;">Total Tickets for Above 24 Hours was higher than the</div>
<div style="position:absolute;left:1382px;top:773.26px;font-size:18px;line-height:18px;font-weight:bold;font-style:normal;color:#1a1a1a;white-space:nowrap;transform:scaleX(0.88);transform-origin:left center;">expected range</div>
<div style="position:absolute;left:1901px;top:197px;width:20px;height:663px;background:#f0f0f0"></div>
<div style="position:absolute;left:1903px;top:485px;width:17px;height:375px;background:#c1c1c1"></div>
<svg width="12" height="8" style="position:absolute;left:1906px;top:205px"><path d="M1,6 L5.5,1 L10,6 Z" fill="#50555f"/></svg>
<div style="position:absolute;left:0;top:0;width:1924px;height:2px;background:#000"></div>
<div style="position:absolute;left:0;top:861px;width:1924px;height:2px;background:#000"></div>
<div style="position:absolute;left:0;top:0;width:2px;height:863px;background:#000"></div>
<div style="position:absolute;left:1922px;top:0;width:2px;height:863px;background:#000"></div>
</body></html>
